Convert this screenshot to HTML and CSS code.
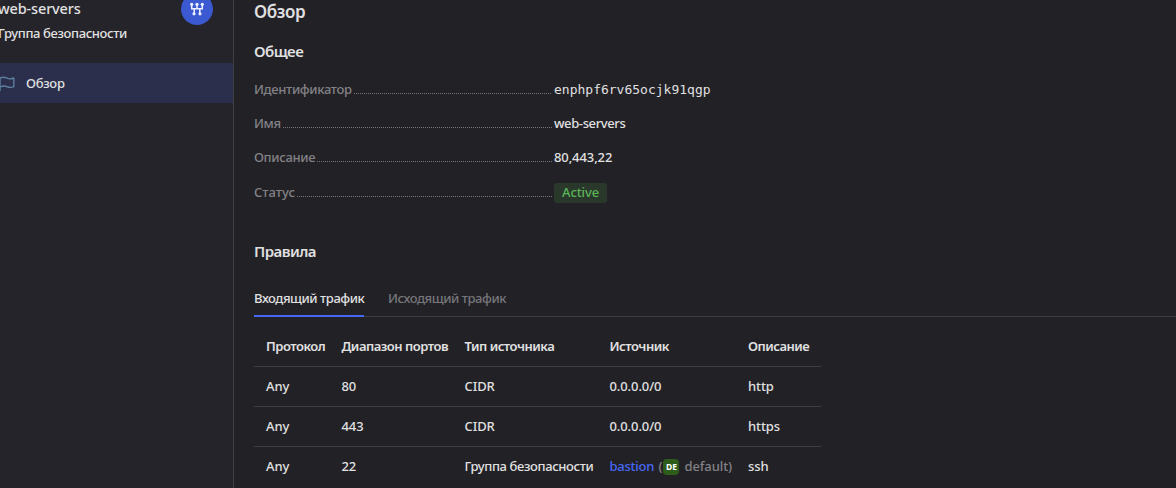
FILE: index.html
```html
<!DOCTYPE html>
<html lang="ru">
<head>
<meta charset="utf-8">
<title>web-servers</title>
<link rel="stylesheet" href="styles.css">
</head>
<body>
<div class="app">
  <aside class="sidebar">
    <header class="resource">
      <div class="resource-text">
        <div class="resource-name">web-servers</div>
        <div class="resource-type tight">Группа безопасности</div>
      </div>
      <div class="resource-icon">
        <svg width="16" height="16" viewBox="0 0 16 16" fill="none" stroke="#eef0ff" stroke-width="1.5">
          <path d="M2.700 3v4.700h10.600V3M8 3v4.700M5.200 7.700v5M10.800 7.700v5"/>
          <g fill="#eef0ff" stroke="none"><circle cx="2.700" cy="3.300" r="1.600"/><circle cx="8" cy="3.300" r="1.600"/><circle cx="13.300" cy="3.300" r="1.600"/><circle cx="5" cy="12.800" r="1.600"/><circle cx="11" cy="12.800" r="1.600"/></g>
        </svg>
      </div>
    </header>
    <nav>
      <a class="nav-item">
        <svg width="16" height="16" viewBox="0 0 16 16" fill="none" stroke="#5c7f9f" stroke-width="1.400" stroke-linejoin="round">
          <path d="M0 2V16.500M0 3.200C2.500 1.800 4.500 2 7 3.200S11.500 4 13.800 3v8.700C11.500 12.700 9.500 12.700 7 11.600S2.500 10.800 0 12"/>
        </svg>
        <span>Обзор</span>
      </a>
    </nav>
  </aside>
  <main class="content">
    <h1>Обзор</h1>
    <h2 class="general">Общее</h2>
    <dl class="props">
      <div class="prop"><dt><span>Идентификатор</span><i class="dots"></i></dt><dd class="mono">enphpf6rv65ocjk91qgp</dd></div>
      <div class="prop"><dt><span>Имя</span><i class="dots"></i></dt><dd class="tight">web-servers</dd></div>
      <div class="prop"><dt><span>Описание</span><i class="dots"></i></dt><dd>80,443,22</dd></div>
      <div class="prop prop-status"><dt><span class="normal">Статус</span><i class="dots"></i></dt><dd><span class="label">Active</span></dd></div>
    </dl>
    <h2 class="rules">Правила</h2>
    <div class="tabs">
      <a class="tab tab-active">Входящий трафик</a>
      <a class="tab">Исходящий трафик</a>
    </div>
    <div class="table">
      <div class="row head"><span>Протокол</span><span>Диапазон портов</span><span>Тип источника</span><span>Источник</span><span>Описание</span></div>
      <div class="row"><span>Any</span><span>80</span><span>CIDR</span><span>0.0.0.0/0</span><span>http</span></div>
      <div class="row"><span>Any</span><span>443</span><span>CIDR</span><span>0.0.0.0/0</span><span>https</span></div>
      <div class="row"><span>Any</span><span>22</span><span class="tight">Группа безопасности</span><span class="source"><a class="link">bastion</a><span class="muted">(</span><b class="badge">DE</b><span class="muted">default)</span></span><span>ssh</span></div>
    </div>
  </main>
</div>
</body>
</html>
```
FILE: styles.css
```css
* { box-sizing: border-box; margin: 0; padding: 0; }
body {
  width: 1176px;
  height: 488px;
  overflow: hidden;
  background: #222126;
  color: #e0e0e1;
  font: 500 13px/18px "Noto Sans", sans-serif;
  letter-spacing: -0.1px;
}
.app { display: flex; height: 488px; }
.sidebar { width: 234px; background: #25242a; border-right: 1px solid #3f3e43; }
.resource { display: flex; justify-content: space-between; height: 63px; padding-right: 20px; }
.resource-text { margin-left: -2px; white-space: nowrap; }
.resource-name { height: 18px; font-size: 14.500px; line-height: 17px; letter-spacing: -0.15px; }
.resource-type { margin-top: 6px; }
.tight { letter-spacing: -0.38px; }
.resource-icon { width: 32px; height: 32px; margin-top: -7px; border-radius: 50%; background: #3b59d0; display: flex; align-items: center; justify-content: center; }
.nav-item { display: flex; align-items: center; gap: 10px; height: 40px; background: #2b2f4c; }
.nav-item span { letter-spacing: -0.3px; }
.content { flex: 1; white-space: nowrap; padding: 1px 0 0 20px; }
h1 { font-size: 17px; line-height: 22px; font-weight: 600; letter-spacing: -0.35px; }
h2 { font-size: 15px; line-height: 20px; font-weight: 600; letter-spacing: -0.55px; }
.general { margin-top: 18px; }
.props { margin-top: 18px; }
.prop { display: flex; height: 34px; line-height: 20px; }
.prop dt { display: flex; width: 298px; margin-right: 2px; color: #838286; letter-spacing: -0.34px; }
.prop dt .normal { letter-spacing: 0; }
.dots { flex: 1; height: 1px; margin: 14px 0 0 2px; background: repeating-linear-gradient(90deg, #77767a 0 1px, transparent 1px 2px); }
.mono { font: 13px/22px "DejaVu Sans Mono", monospace; letter-spacing: 0; }
.prop-status { margin-top: 1px; }
.label { display: block; width: 53px; height: 20px; margin-top: 1px; padding: 0 8px; border-radius: 3px; background: #2a382c; color: #5bb557; line-height: 19px; }
.rules { margin-top: 25px; }
.tabs { display: flex; gap: 24px; height: 37px; margin-top: 19px; border-bottom: 1px solid #3f3e43; }
.tab { height: 37px; line-height: 36px; color: #77767b; letter-spacing: -0.45px; }
.tab-active { width: 110px; color: #e0e0e1; border-bottom: 2px solid #4768f5; }
.table { width: 567px; margin-top: 10px; }
.row { display: grid; grid-template-columns: 75.500px 123px 145px 138.500px 1fr; height: 40px; padding-left: 12px; line-height: 39px; border-bottom: 1px solid #3f3e43; }
.head { font-weight: 600; letter-spacing: -0.49px; }
.row:last-child { border-bottom: 0; }
.source { display: flex; align-items: center; height: 39px; }
.link { width: 49px; color: #4768f5; letter-spacing: -0.25px; }
.muted { color: #838286; }
.badge { width: 16px; height: 16px; margin: 1px 5px 0 1px; border-radius: 4px; background: #2d5c1b; color: #fff; font-size: 8.500px; line-height: 16px; text-align: center; }
```
